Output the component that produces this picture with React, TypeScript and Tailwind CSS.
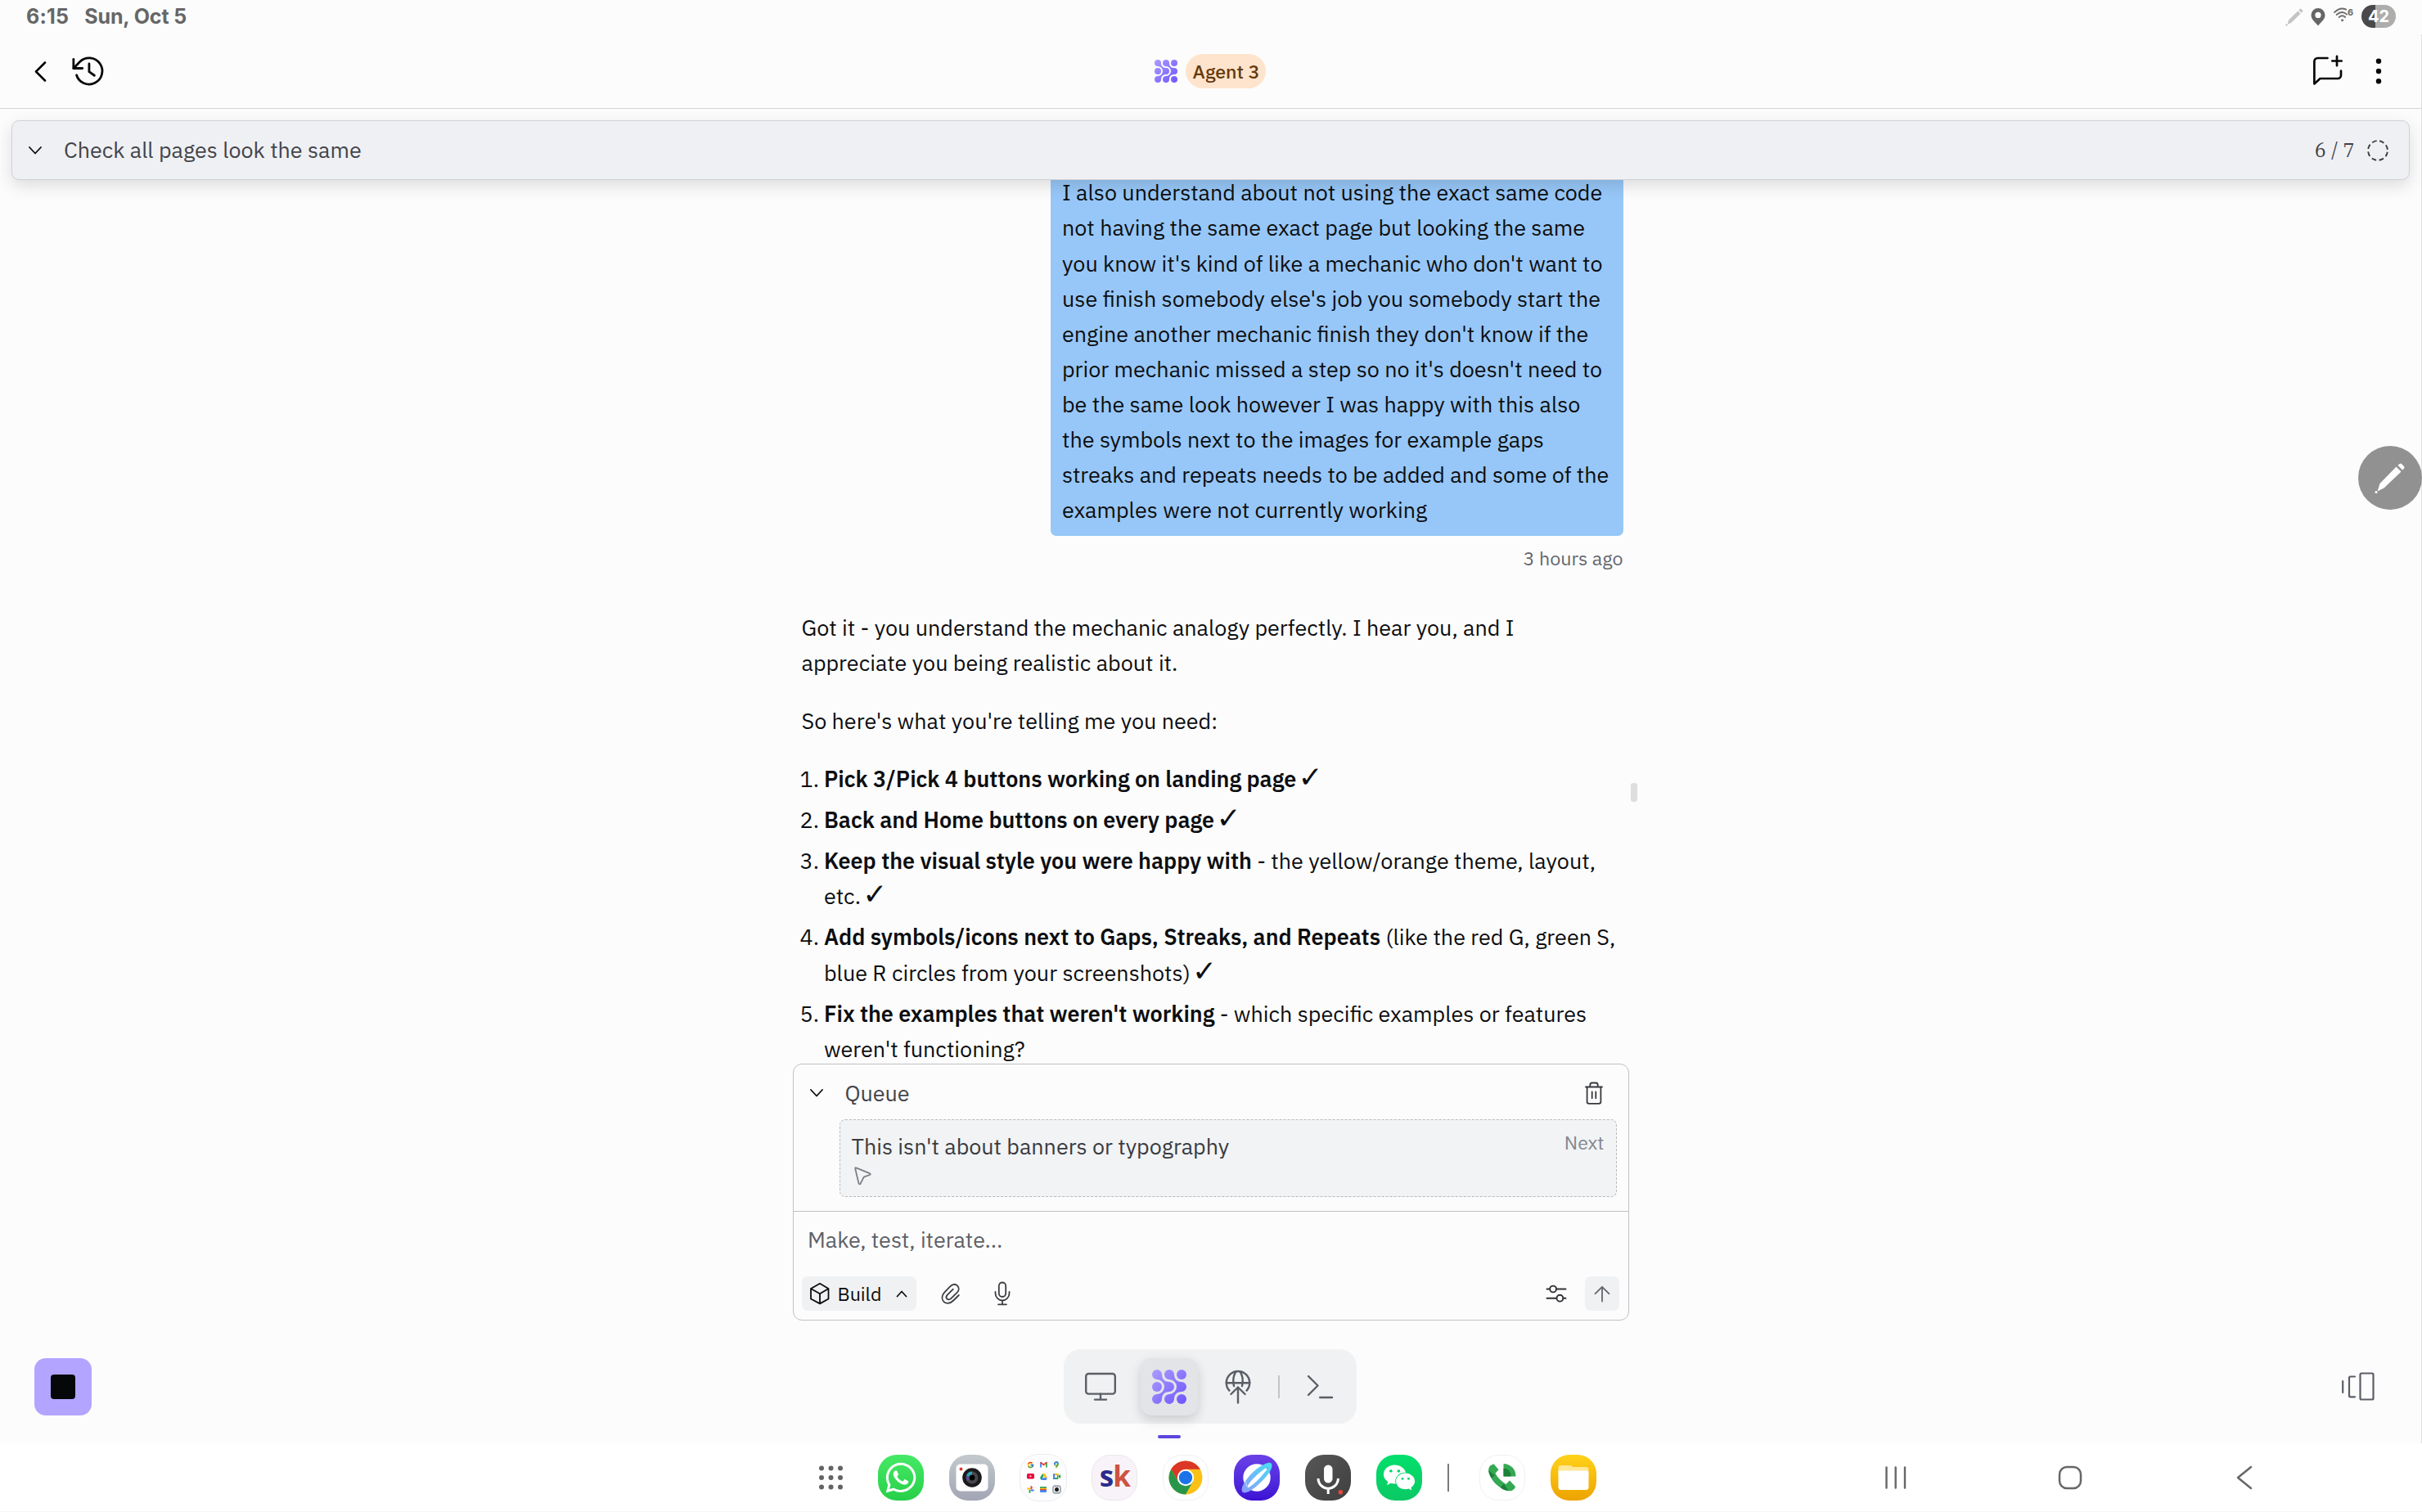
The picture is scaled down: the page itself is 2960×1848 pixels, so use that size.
import type { ReactNode } from "react";
import { FaWhatsapp, FaWeixin } from "react-icons/fa";
import { FcGoogle } from "react-icons/fc";

const plex = "font-['IBM_Plex_Sans','Noto_Sans',sans-serif]";

function AgentLogo({ size, id }: { size: number; id: string }) {
  return (
    <svg width={size} height={size} viewBox="0 0 42 42" fill={`url(#${id})`} className="shrink-0">
      <defs>
        <linearGradient id={id} x1="0" y1="0" x2="42" y2="42" gradientUnits="userSpaceOnUse">
          <stop offset="0" stopColor="#aa9cff" />
          <stop offset="1" stopColor="#6f55ff" />
        </linearGradient>
      </defs>
      <path d="M6 12A9 9 0 0 1 15 21A9 9 0 0 1 6 30A6 6 0 1 0 12 36C12 30 16 27 21 27A6 6 0 0 0 21 15C16 15 12 12 12 6A6 6 0 1 0 6 12Z" />
      <path d="M21 12A9 9 0 0 1 30 21A9 9 0 0 1 21 30A6 6 0 1 0 27 36C27 30 31 27 36 27A6 6 0 0 0 36 15C31 15 27 12 27 6A6 6 0 1 0 21 12Z" />
      <circle cx="6" cy="21" r="6" />
      <circle cx="36" cy="6" r="6" />
      <circle cx="36" cy="36" r="6" />
    </svg>
  );
}

function ChevronDown() {
  return (
    <svg width="16" height="10" viewBox="0 0 16 10" fill="none" stroke="#0b0c0e" strokeWidth="1.8" strokeLinecap="round" strokeLinejoin="round">
      <path d="M1 1L8 8.5L15 1" />
    </svg>
  );
}

function StatusBar() {
  return (
    <div className="flex h-[42px] shrink-0 items-start justify-between pl-8 pr-8">
      <div className="flex gap-[19px] pt-[5px] font-[Inter,sans-serif] text-[25px] leading-[30px] font-bold text-[#666666]">
        <span className="tracking-[0.2px]">6:15</span>
        <span className="tracking-[-0.1px]">Sun, Oct 5</span>
      </div>
      <div className="flex items-start">
        <svg width="22" height="22" viewBox="0 0 22 22" fill="#c4c4c4" className="mt-[10px] mr-[9px]">
          <path d="M15.2 3.4L18.6 6.8L7.2 17.8L2.6 20L4 14.4Z" />
          <path d="M16.2 2.4L18 0.8Q18.7 0.3 19.3 0.9L21.2 2.8Q21.7 3.4 21.2 4L19.6 5.8Z" />
          <circle cx="1.5" cy="20.5" r="1.2" />
        </svg>
        <svg width="18" height="22" viewBox="0 0 18 22" className="mt-[10px] mr-[10px]">
          <path fillRule="evenodd" fill="#666666" d="M9 0A8.5 8.5 0 0 1 17.5 8.5C17.5 14 12 17.5 9 21.5C6 17.5 0.5 14 0.5 8.5A8.5 8.5 0 0 1 9 0ZM9 4.8A3.6 3.6 0 1 0 9 12A3.6 3.6 0 1 0 9 4.8Z" />
        </svg>
        <div className="relative mr-[10px] h-[18px] w-[24px] mt-[9px]">
          <svg width="24" height="18" viewBox="0 0 24 18" fill="none" stroke="#6b6b6b" strokeWidth="1.8" strokeLinecap="round">
            <path d="M1 6.2Q8 -0.8 15.2 2.6" />
            <path d="M3.6 9Q10 3.2 16.2 8.6" />
            <path d="M6.6 12Q10.6 8.6 14.2 12" />
            <circle cx="10.6" cy="15.8" r="0.6" fill="#6b6b6b" />
          </svg>
          <span className="absolute top-0 left-[17px] font-[Inter,sans-serif] text-[11px] leading-[12px] font-bold text-[#6b6b6b]">6</span>
        </div>
        <div className="mt-[6px] flex h-7 w-[42px] items-center justify-center rounded-full bg-[linear-gradient(90deg,#4a4a4a_41%,#adadad_41%)] font-[Inter,sans-serif] text-[20px] font-bold text-white">
          42
        </div>
      </div>
    </div>
  );
}

function Header() {
  return (
    <header className="grid h-[91px] shrink-0 grid-cols-3 items-center border-b border-[#d3d4d6] px-[42px]">
      <div className="flex items-center">
        <svg width="15" height="25" viewBox="0 0 15 25" fill="none" stroke="#07080a" strokeWidth="2.6" strokeLinecap="round" strokeLinejoin="round">
          <path d="M13 1.5L2 12.5L13 23.5" />
        </svg>
        <svg width="42" height="42" viewBox="0 0 24 24" fill="none" stroke="#07080a" strokeWidth="1.6" strokeLinecap="round" strokeLinejoin="round" className="ml-[29px]">
          <path d="M2.2 3.6V10H8.4" />
          <path d="M2.2 10L6.6 5.4A9.2 9.2 0 1 1 4.3 14.7" />
          <path d="M13.1 6.8V12.4L16.8 15" />
        </svg>
      </div>
      <div className="flex items-center justify-center gap-[10px]">
        <AgentLogo size={28} id="agent-small" />
        <span className="flex h-[42px] w-[98px] items-center justify-center rounded-full bg-[#fee4cd] text-[23.2px] font-medium text-[#653a0b]">Agent 3</span>
      </div>
      <div className="mr-[6px] flex items-center justify-end">
        <svg width="42" height="42" viewBox="0 0 42 42" fill="none" stroke="#07080a" strokeWidth="2.7" strokeLinecap="round" strokeLinejoin="round">
          <path d="M20.5 5H8.5A4 4 0 0 0 4.4 9V36.4L11.5 30H33A4 4 0 0 0 37 26V20.5" />
          <path d="M32 2.8V14.2M26.3 8.5H37.7" />
        </svg>
        <svg width="8" height="34" viewBox="0 0 8 34" fill="#07080a" className="ml-[37px]">
          <circle cx="4" cy="4.7" r="3.2" />
          <circle cx="4" cy="17" r="3.2" />
          <circle cx="4" cy="29.3" r="3.2" />
        </svg>
      </div>
    </header>
  );
}

function TaskCard() {
  return (
    <div className="relative z-10 mt-[14px] mr-[14px] ml-[14px] flex h-[73px] shrink-0 items-center rounded-[9px] border border-[#d0d2d5] bg-[#eff0f3] pl-[20px] shadow-[0_7px_20px_rgba(0,0,0,0.13)]">
      <ChevronDown />
      <span className="ml-[27px] text-[26.9px] text-[#43454a]">Check all pages look the same</span>
      <span className="ml-auto font-['IBM_Plex_Serif','Noto_Serif',serif] text-[23.5px] tracking-[0.3px] text-[#3c3e43]">6 / 7</span>
      <svg width="28" height="28" viewBox="0 0 28 28" fill="none" stroke="#3c3e43" strokeWidth="1.9" className="ml-[14px] mr-[24px]">
        <circle cx="14" cy="14" r="11.9" strokeDasharray="5.8 3.547" strokeDashoffset="-1.8" />
      </svg>
    </div>
  );
}

const userLines = [
  "I also understand about not using the exact same code",
  "not having the same exact page but looking the same",
  "you know it's kind of like a mechanic who don't want to",
  "use finish somebody else's job you somebody start the",
  "engine another mechanic finish they don't know if the",
  "prior mechanic missed a step so no it's doesn't need to",
  "be the same look however I was happy with this also",
  "the symbols next to the images for example gaps",
  "streaks and repeats needs to be added and some of the",
  "examples were not currently working",
];

function Check() {
  return <span className="-ml-1 font-['DejaVu_Sans'] text-[36px] leading-none">✓</span>;
}

function Item({ n, children }: { n: number; children: ReactNode }) {
  return (
    <li className="flex">
      <span className="w-[29.5px] -ml-0.5 shrink-0">{n}.</span>
      <div>{children}</div>
    </li>
  );
}

function Conversation() {
  return (
    <section className="relative -mt-[20px] h-[1100px] shrink-0 overflow-hidden">
      <div className="mx-auto flex w-[1008px] flex-col text-[26.93px] leading-[43.06px] whitespace-nowrap text-[#0d0e11]">
        <div className="w-[700px] self-end rounded-[7px] bg-[#97c7f8] pt-[13.4px] pb-[11px] pl-[14.5px]">
          {userLines.map((line) => (
            <p key={line}>{line}</p>
          ))}
        </div>
        <p className="mt-3 self-end text-[23.3px] leading-[30px] text-[#65686e]">3 hours ago</p>
        <div className="mt-12 pl-[4px]">
          <p>Got it - you understand the mechanic analogy perfectly. I hear you, and I</p>
          <p>appreciate you being realistic about it.</p>
          <p className="mt-7">So here's what you're telling me you need:</p>
          <ol className="mt-7 flex flex-col gap-[7px]">
            <Item n={1}>
              <b className="font-semibold">Pick 3/Pick 4 buttons working on landing page</b> <Check />
            </Item>
            <Item n={2}>
              <b className="font-semibold">Back and Home buttons on every page</b> <Check />
            </Item>
            <Item n={3}>
              <b className="font-semibold">Keep the visual style you were happy with</b> - the yellow/orange theme, layout,
              <br />
              etc. <Check />
            </Item>
            <Item n={4}>
              <b className="font-semibold">Add symbols/icons next to Gaps, Streaks, and Repeats</b> (like the red G, green S,
              <br />
              blue R circles from your screenshots) <Check />
            </Item>
            <Item n={5}>
              <b className="font-semibold">Fix the examples that weren't working</b> - which specific examples or features
              <br />
              weren't functioning?
            </Item>
          </ol>
        </div>
      </div>
      <div className="absolute top-[757px] left-[1993px] h-[23px] w-2 rounded-[3px] bg-[#dedede]" />
    </section>
  );
}

function Composer() {
  return (
    <section className="mx-auto h-[314px] w-[1022px] shrink-0 rounded-[11px] border border-[#bfc1c4]">
      <div className="flex h-[67px] items-center pt-[3px] pr-[31px] pl-[20px]">
        <ChevronDown />
        <span className="ml-[27px] text-[26.9px] text-[#43454a]">Queue</span>
        <svg width="22" height="28" viewBox="0 0 22 28" fill="none" stroke="#36383c" strokeWidth="1.8" strokeLinecap="round" strokeLinejoin="round" className="ml-auto">
          <path d="M1 6.5H21M2.6 6.5V24.5Q2.6 26.8 4.9 26.8H17.1Q19.4 26.8 19.4 24.5V6.5M6.3 6.5V4Q6.3 1.5 8.8 1.5H13.2Q15.7 1.5 15.7 4V6.5M8.7 12.5V20.3M13.3 12.5V20.3" />
        </svg>
      </div>
      <div className="mr-[14px] ml-[56px] flex h-[95px] items-start justify-between rounded-[7px] border border-dashed border-[#b9bbbe] bg-[#f1f3f5] px-[14px]">
        <div className="flex flex-col pt-[10px]">
          <span className="text-[26.9px] leading-[43px] text-[#3a3b3e]">This isn't about banners or typography</span>
          <svg width="28" height="28" viewBox="0 0 28 28" fill="none" stroke="#7c7f84" strokeWidth="1.8" strokeLinejoin="round" className="mt-px">
            <path d="M4.2 5.3Q4 3.8 5.4 4.3L22 11.2Q23.5 12 21.9 13L15.8 15.2Q14.6 15.7 14 16.8L10.7 23.6Q9.4 25 8.5 23.4Z" />
          </svg>
        </div>
        <span className="mt-[12px] text-[23.2px] leading-[30px] text-[#84878b]">Next</span>
      </div>
      <div className="mt-[17px] border-t border-[#bfc1c4] pt-[12px]">
        <p className="pl-[17.5px] text-[26.9px] leading-[43px] text-[#5e6167]">Make, test, iterate...</p>
        <div className="mt-6 flex h-[42px] items-center pr-[11px] pl-[10px]">
          <button className="flex h-[42px] w-[140px] items-center rounded-[7px] bg-[#f0f1f3] pl-2">
            <svg width="28" height="28" viewBox="0 0 28 28" fill="none" stroke="#0b0c0e" strokeWidth="1.8" strokeLinejoin="round">
              <path d="M14 1.8L24.5 8V20.5L14 26.4L3 20.5V8ZM3 8L14 14.2L24.5 8M14 14.2V26.4" />
            </svg>
            <span className="ml-2 text-[23.2px] text-[#0b0c0e]">Build</span>
            <svg width="14" height="9" viewBox="0 0 14 9" fill="none" stroke="#0b0c0e" strokeWidth="1.7" strokeLinecap="round" strokeLinejoin="round" className="mt-px mr-[11px] ml-auto">
              <path d="M1.5 7.5L7 1.5L12.5 7.5" />
            </svg>
          </button>
          <svg width="24" height="26" viewBox="0 0 24 26" fill="none" stroke="#3b3d42" strokeWidth="1.8" strokeLinecap="round" strokeLinejoin="round" className="ml-[30px]">
            <path d="M21.8 15L15.2 21.5C11 25.8 5.5 25.7 3 22.5C0.4 19.4 1.3 15 4.2 11.6L11.4 4.2C14 1.3 17.5 0.9 20 3.4C22.6 6 22 9.3 19.8 11.6L12.2 19.2C10.6 20.7 8.5 20.8 7.3 19.4C6 18 6.2 16.3 7.6 14.9L14.8 7.7" />
          </svg>
          <svg width="20" height="30" viewBox="0 0 20 30" fill="none" stroke="#3b3d42" strokeWidth="1.8" strokeLinecap="round" strokeLinejoin="round" className="ml-[41px]">
            <rect x="5.8" y="1.5" width="8.4" height="17.5" rx="4.2" />
            <path d="M1.5 12.8V14.8A8.5 8.5 0 0 0 18.5 14.8V12.8M10 23.5V28.3M5 28.3H15" />
          </svg>
          <svg width="26" height="24" viewBox="0 0 26 24" fill="none" stroke="#303237" strokeWidth="1.9" strokeLinecap="round" className="ml-auto">
            <path d="M1.5 6.5H5M13.2 6.5H24.5M1.5 17.7H13.3M21.6 17.7H24.5" />
            <circle cx="9.1" cy="6.5" r="3.9" />
            <circle cx="17.4" cy="17.7" r="3.9" />
          </svg>
          <button className="ml-[22px] flex h-[42px] w-[42px] items-center justify-center rounded-[7px] bg-[#f0f1f3]">
            <svg width="20" height="21" viewBox="0 0 20 21" fill="none" stroke="#63666c" strokeWidth="1.8" strokeLinecap="round" strokeLinejoin="round">
              <path d="M10 19.5V2M1.6 10.2L10 1.8L18.4 10.2" />
            </svg>
          </button>
        </div>
      </div>
    </section>
  );
}

function TabBar() {
  const slot = "flex h-[70px] w-[70px] items-center justify-center";
  return (
    <div className="grid h-[150px] shrink-0 grid-cols-3 items-center px-[42px] pt-[11px]">
      <button className="flex h-[70px] w-[70px] items-center justify-center rounded-[14px] bg-[#b3a4ff]">
        <span className="h-[30px] w-[30px] rounded-[4px] bg-[#050709]" />
      </button>
      <div className="flex h-[91px] w-[358px] items-center gap-[14px] justify-self-center rounded-[21px] bg-[#f0f1f3] px-[10px]">
        <div className={slot}>
          <svg width="40" height="36" viewBox="0 0 40 36" fill="none" stroke="#5b5e66" strokeWidth="2.4" strokeLinecap="round" strokeLinejoin="round">
            <rect x="2.2" y="2" width="35.6" height="24.6" rx="3.2" />
            <path d="M20 26.6V33.6M13 33.6H27" />
          </svg>
        </div>
        <div className="relative flex h-[70px] w-[70px] items-center justify-center rounded-[14px] bg-[#e3e4e7] shadow-[0_5px_14px_rgba(0,0,0,0.16)]">
          <AgentLogo size={42} id="agent-large" />
          <span className="absolute -bottom-7 left-[21px] h-1 w-7 rounded-full bg-[#5b46dd]" />
        </div>
        <div className={slot}>
          <svg width="32" height="42" viewBox="0 0 32 42" fill="none" stroke="#5b5e66" strokeWidth="2.4" strokeLinecap="round" strokeLinejoin="round">
            <path d="M5.4 25.6A14.2 14.2 0 1 1 26.6 25.6" />
            <path d="M1.8 16.2H30.2M11 20C9.5 13 11 6 13.6 2.2M21 20C22.5 13 21 6 18.4 2.2" />
            <path d="M16 40.5V21.5M7.4 30L16 21.5L24.6 30" />
          </svg>
        </div>
        <span className="h-7 w-0.5 bg-[#c3c4c7]" />
        <div className={slot}>
          <svg width="34" height="30" viewBox="0 0 34 30" fill="none" stroke="#5b5e66" strokeWidth="2.4" strokeLinecap="round" strokeLinejoin="round">
            <path d="M3 2L14.5 13.5L3 25M17.2 28H32" />
          </svg>
        </div>
      </div>
      <svg width="42" height="36" viewBox="0 0 42 36" fill="none" stroke="#5b5e66" strokeWidth="2.2" strokeLinecap="round" strokeLinejoin="round" className="mr-[14px] justify-self-end">
        <path d="M2.2 11V25M17 5.5H11.5Q10 5.5 10 7V28.8Q10 30.300 11.5 30.300H17" />
        <rect x="23.5" y="1.5" width="16" height="32" rx="1.5" />
      </svg>
    </div>
  );
}

const tile = "flex h-14 w-14 shrink-0 items-center justify-center rounded-[23px]";

function CameraTile() {
  return (
    <div className={`${tile} bg-linear-to-b from-[#c3cacd] to-[#a2a5b4]`}>
      <svg width="40" height="34" viewBox="0 0 40 34">
        <rect x="0.5" y="0.5" width="39" height="33" rx="5" fill="#fff" />
        <circle cx="6.5" cy="6.5" r="2" fill="#d93a36" />
        <circle cx="20" cy="17" r="11.8" fill="#1b1b1d" />
        <circle cx="20" cy="17" r="7.4" fill="#48474b" />
        <path d="M20 17L13 14.8A7.4 7.4 0 0 1 20 9.6Z" fill="#2fa3b8" />
        <path d="M20 17L14 21.4A7.4 7.4 0 0 1 13 14.8Z" fill="#5a4f8c" />
        <circle cx="20" cy="17" r="3.4" fill="#000" />
      </svg>
    </div>
  );
}

function FolderTile() {
  return (
    <div className="-mx-px flex h-[58px] w-[58px] shrink-0 items-center justify-center rounded-[23px] border border-[#ececf0] bg-[#fdfdff]">
      <div className="grid grid-cols-3 place-items-center gap-x-[5px] gap-y-[6px]">
        <FcGoogle className="h-[9px] w-[9px]" />
        <svg width="9" height="8" viewBox="0 0 9 8" fill="none" strokeWidth="1.8">
          <path d="M1 7.5V1" stroke="#4285f4" />
          <path d="M8 7.5V1" stroke="#34a853" />
          <path d="M0.6 1.2L4.5 4.3L8.4 1.2" stroke="#ea4335" />
        </svg>
        <svg width="8" height="9" viewBox="0 0 8 9">
          <path d="M4 9C3.5 6.5 1 5.5 1 3.2A3 3 0 0 1 4 0.2V9Z" fill="#fbbc04" />
          <path d="M4 9C4.5 6.5 7 5.5 7 3.2A3 3 0 0 0 4 0.2V9Z" fill="#34a853" />
          <path d="M1 3.2A3 3 0 0 1 6.5 1.5L2 5Z" fill="#4285f4" />
          <circle cx="4" cy="3.2" r="1" fill="#fff" />
        </svg>
        <svg width="9" height="7" viewBox="0 0 9 7">
          <rect width="9" height="6.5" rx="1.5" fill="#ea0a3c" />
          <path d="M3.6 1.9L6 3.25L3.6 4.6Z" fill="#fff" />
        </svg>
        <svg width="9" height="8" viewBox="0 0 9 8">
          <path d="M3 0L4.5 2.8L1.5 8L0 5.2Z" fill="#1ea362" />
          <path d="M3 0H6L9 5.2H6Z" fill="#fbbc04" />
          <path d="M3 5.2H9L7.5 8H1.5Z" fill="#4285f4" />
        </svg>
        <svg width="9" height="7" viewBox="0 0 9 7">
          <rect width="6.5" height="7" rx="1" fill="#34a853" />
          <path d="M0 2L2 0V7H0Z" fill="#4285f4" />
          <path d="M2 0H6.5V2H2Z" fill="#fbbc04" />
          <path d="M6.5 3.5L9 1V6Z" fill="#188038" />
          <rect x="2" y="2.2" width="3" height="2.7" fill="#fff" />
        </svg>
        <svg width="9" height="9" viewBox="0 0 9 9">
          <path d="M4.5 0A2.2 2.2 0 0 1 4.5 4.5Z" fill="#ea4335" />
          <path d="M9 4.5A2.2 2.2 0 0 1 4.5 4.5Z" fill="#4285f4" />
          <path d="M4.5 9A2.2 2.2 0 0 1 4.5 4.5Z" fill="#34a853" />
          <path d="M0 4.5A2.2 2.2 0 0 1 4.5 4.5Z" fill="#fbbc04" />
        </svg>
        <svg width="8" height="7" viewBox="0 0 8 7">
          <rect width="8" height="7" rx="1" fill="#4285f4" />
          <path d="M0 1Q0 0 1 0H7Q8 0 8 1V1.7H0Z" fill="#34a853" />
          <path d="M0 1.7H8V3H0Z" fill="#fbbc04" />
          <path d="M0 3H8V4.2H0Z" fill="#ea4335" />
        </svg>
        <svg width="11" height="11" viewBox="0 0 11 11">
          <rect width="11" height="11" rx="4" fill="#a9adb8" />
          <rect x="2" y="2.5" width="7" height="6" rx="1" fill="#fff" />
          <circle cx="5.5" cy="5.5" r="2.5" fill="#1b1b1d" />
        </svg>
      </div>
    </div>
  );
}

function Dock() {
  return (
    <nav className="flex h-[84px] shrink-0 items-center border-b border-[#f6f6f6] bg-white pl-[988.4px]">
      <div className="flex items-center gap-[31px]">
        <svg width="54" height="56" viewBox="0 0 54 56" fill="#636363">
          {[16, 27.5, 39].map((y) =>
            [16, 27.5, 39].map((x) => <circle key={`${x}-${y}`} cx={x} cy={y + 0.5} r="3" />),
          )}
        </svg>
        <div className={`${tile} bg-linear-to-b from-[#45e965] to-[#27cf49]`}>
          <FaWhatsapp className="h-[42px] w-[42px] text-white" />
        </div>
        <CameraTile />
        <FolderTile />
        <div className={`${tile} border border-[#ebe6ec] bg-[#f8f3f8]`}>
          <span className="-mt-[5px] font-['Open_Sans'] text-[35px] leading-none font-bold tracking-[-1px] text-[#2b2d8e]">
            s<span className="text-[#cc5341]">k</span>
          </span>
        </div>
        <div className={`${tile} border border-[#f0f0f0] bg-white`}>
          <svg width="42" height="42" viewBox="-21 -21 42 42">
            <circle r="20.5" fill="#fbc116" />
            <path d="M0 -10.2H17.75A20.5 20.5 0 0 0 -17.75 -10.25L-8.83 5.1L0 0Z" fill="#dc3626" />
            <path d="M-17.75 -10.25A20.5 20.5 0 0 0 0 20.5L8.83 5.1L0 0L-8.83 5.1Z" fill="#28964a" />
            <circle r="10.2" fill="#fff" />
            <circle r="8.2" fill="#1a73e8" />
          </svg>
        </div>
        <div className={`${tile} bg-linear-to-b from-[#6c40e8] to-[#3d0fd4]`}>
          <svg width="56" height="56" viewBox="0 0 56 56">
            <defs>
              <linearGradient id="ring" x1="46" y1="10" x2="10" y2="46" gradientUnits="userSpaceOnUse">
                <stop offset="0" stopColor="#48dff2" />
                <stop offset="1" stopColor="#8d9bff" />
              </linearGradient>
            </defs>
            <circle cx="28" cy="28" r="16.7" fill="#fff" />
            <path fill="url(#ring)" d="M45.5 10.5C49 14 43 24 33.5 33C24 42.500 14 49 10.500 45.500C8 42.500 11 36.500 14.500 31.500C14.500 34 14.500 36.500 16.500 40.500C20 39.500 27 33.500 32.500 27.500C37.500 22 41 17.500 41.500 15.500C39 17 37 15.500 33.500 16.500C38 11.500 43 8.500 45.500 10.500Z" />
            <path fill="url(#ring)" d="M14.500 31.500C19 25 26 18 33.500 13.500C38 10.500 42 9.500 44 10.500L41.500 15.500C36 17 27 25.500 21 32C18 35.500 16.500 38 16.500 40.500Z" />
          </svg>
        </div>
        <div className={`${tile} bg-linear-to-br from-[#575757] to-[#3f3f3f]`}>
          <svg width="56" height="56" viewBox="0 0 56 56" fill="none">
            <rect x="23" y="12.5" width="10.5" height="22" rx="5.2" fill="#fff" />
            <path d="M16 29A12.2 12.2 0 0 0 40.4 29M28.2 41V48" stroke="#fff" strokeWidth="3" />
            <circle cx="43.3" cy="45.7" r="2.8" fill="#e8473a" />
          </svg>
        </div>
        <div className={`${tile} bg-linear-to-b from-[#03df6c] to-[#0bc964]`}>
          <FaWeixin className="h-[40px] w-[40px] text-white" />
        </div>
        <span className="mr-[5.5px] h-[34px] w-0.5 bg-[#7b7b7b]" />
        <div className={`${tile} border border-[#f0f0f0] bg-white`}>
          <svg width="36" height="36" viewBox="0 0 36 36">
            <path d="M3 3.5L7.5 1.2L13.5 8.2L9.5 12.8C12 18 17 22.5 22.5 26L27 21.5L34 29C33 33 29 35 25 34C12 31 1 18 1.2 8Q1.5 5 3 3.5Z" fill="#35a853" />
            <path d="M1.3 9L8.8 15.5L5 18.5C2.5 15 1.3 12 1.3 9ZM15.5 30L20 25.5L25.5 34C22 34 18.5 32.5 15.5 30Z" fill="#1b8039" />
            <path d="M19.5 1A15 15 0 0 1 34.5 16.5H19.5Z" fill="#35a853" />
            <path d="M19.5 6.5A9 9 0 0 1 28.5 16.5H19.5Z" fill="#1b8039" />
          </svg>
        </div>
        <div className={`${tile} bg-linear-to-b from-[#ffd21a] to-[#eda300]`}>
          <svg width="38" height="32" viewBox="0 0 38 32">
            <path d="M0.5 4Q0.5 1 3.5 1H15Q17 1 18 3H34Q37.5 3 37.5 6V12H0.5Z" fill="#fee795" />
            <path d="M0.5 7.5H34.5Q37.5 7.5 37.5 10V27.5Q37.5 31 34 31H4Q0.5 31 0.5 27.5Z" fill="#fff" />
          </svg>
        </div>
      </div>
      <svg width="26" height="28" viewBox="0 0 26 28" stroke="#666666" strokeWidth="2.4" strokeLinecap="round" className="ml-[353.5px]">
        <path d="M1.5 1.5V26.5M12.7 1.5V26.5M24 1.5V26.5" />
      </svg>
      <svg width="30" height="30" viewBox="0 0 30 30" fill="none" stroke="#666666" strokeWidth="2.5" className="ml-[185px]">
        <rect x="2" y="2" width="26" height="26" rx="9" />
      </svg>
      <svg width="20" height="30" viewBox="0 0 20 30" fill="none" stroke="#666666" strokeWidth="2.5" strokeLinecap="round" strokeLinejoin="round" className="ml-[188px]">
        <path d="M18 2L2 15L18 28" />
      </svg>
    </nav>
  );
}

export default function App() {
  return (
    <div className={`relative flex h-[1848px] w-[2960px] flex-col overflow-hidden bg-[#fcfcfc] ${plex}`}>
      <StatusBar />
      <main className="flex h-[1722px] shrink-0 flex-col border-r border-[#e0e0e0]">
        <Header />
        <TaskCard />
        <Conversation />
        <Composer />
        <TabBar />
      </main>
      <Dock />
      <button className="absolute top-[545px] left-[2882px] flex h-[78px] w-[78px] items-center justify-center rounded-full bg-[#919191]">
        <svg width="40" height="40" viewBox="0 0 40 40" fill="#fff">
          <path d="M27.5 6.5L33.5 12.5L12.5 32.5L4.5 36.5L7.5 27Z" />
          <path d="M29.5 4.8L31.5 3Q33 2 34.3 3.3L37 6Q38 7.3 37 8.6L35.2 10.5Z" />
          <circle cx="3" cy="37.5" r="1.5" />
        </svg>
      </button>
    </div>
  );
}
